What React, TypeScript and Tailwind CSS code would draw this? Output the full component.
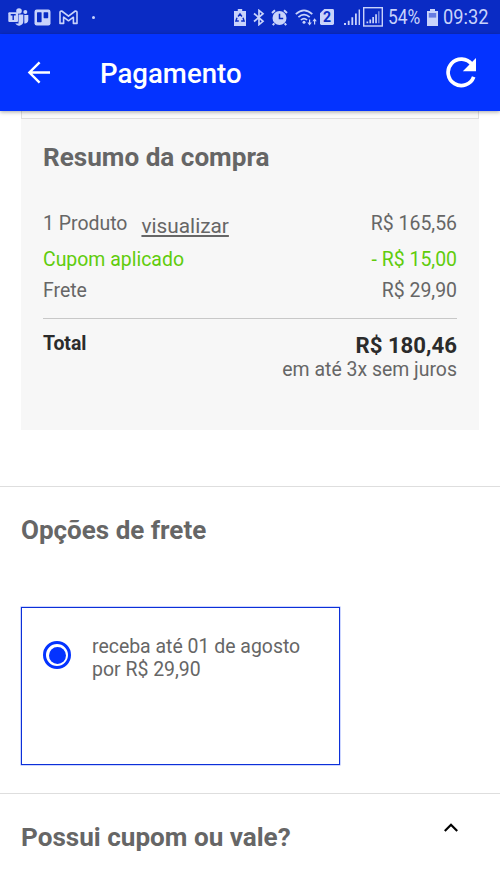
import React from 'react';

const TeamsIcon = () => (
  <svg width="21" height="18" viewBox="0 0 21 18" fill="currentColor">
    <circle cx="11" cy="3" r="2.8" />
    <circle cx="17.3" cy="4" r="2" />
    <path d="M10.5 6.5h4.8v6.8a4.3 4.3 0 0 1-8 2.2h3.2z" />
    <path d="M16.3 7h4v5a3.4 3.4 0 0 1-4.2 3.3q.5-1 .2-2.3z" />
    <rect x="0.3" y="4.3" width="9.7" height="9.6" rx="1" />
    <path d="M2.7 6.7h5M5.2 6.7v5.2" stroke="#0a2bc4" strokeWidth="1.4" fill="none" />
  </svg>
);

const BoardIcon = () => (
  <svg width="17" height="17" viewBox="0 0 17 17">
    <rect x="0.5" y="0.5" width="16" height="16" rx="2.2" fill="currentColor" />
    <rect x="3" y="3.2" width="4.6" height="10" rx="0.6" fill="#0a2bc4" />
    <rect x="9.6" y="3.2" width="4.6" height="6" rx="0.6" fill="#0a2bc4" />
  </svg>
);

const MailIcon = () => (
  <svg width="19" height="15" viewBox="0 0 19 15" fill="none" stroke="currentColor" strokeWidth="1.6" strokeLinejoin="round">
    <path d="M1 2.6Q1 .9 2.7 1L9.5 6.2 16.3 1Q18 .9 18 2.6V13.4h-3.6V7.2L9.5 10.8 4.6 7.2v6.2H1z" />
  </svg>
);

const BatterySaverIcon = () => (
  <svg width="12" height="17" viewBox="0 0 12 17">
    <path d="M3.8 0h4.4v2H12v15H0V2h3.8z" fill="currentColor" />
    <path d="M4.1 7.5 6 4.9l1.9 2.6M9 8.8l1.1 3.2H7.2M4.8 12H1.9L3 8.8" fill="none" stroke="#0a2bc4" strokeWidth="1.4" />
  </svg>
);

const BluetoothIcon = () => (
  <svg width="12" height="17" viewBox="0 0 12 17" fill="none" stroke="currentColor" strokeWidth="1.7">
    <path d="m1 4.5 9 7.8-4 3.3V1.4l4 3.3-9 7.8" />
  </svg>
);

const AlarmIcon = () => (
  <svg width="17" height="17" viewBox="0 0 17 17">
    <circle cx="8.5" cy="9" r="7" fill="currentColor" />
    <path d="m1 4 3-2.8M16 4l-3-2.8M3.3 14.3l-1.5 1.9M13.7 14.3l1.5 1.9" stroke="currentColor" strokeWidth="2" />
    <path d="M8.5 4.8v4.7h3.7" fill="none" stroke="#0a2bc4" strokeWidth="1.5" />
  </svg>
);

const WifiIcon = () => (
  <svg width="23" height="17" viewBox="0 0 23 17" fill="none" stroke="currentColor" strokeWidth="1.7">
    <path d="M.8 5.2Q9 -2.5 17.3 5.2M3.4 8.2Q9 3 14.7 8.2M5.9 11Q9 8.1 12.1 11" />
    <circle cx="9" cy="13.3" r="1.5" fill="currentColor" stroke="none" />
    <path d="M14.6 10.5v4M19.6 15.5v-4" strokeWidth="1.2" />
    <path d="M12.4 13.5h4.4l-2.2 3zM17.4 12.3h4.4l-2.2-3z" fill="currentColor" stroke="none" />
  </svg>
);

const SimIcon = () => (
  <div className="relative h-4 w-[14px]">
    <svg className="block" width="14" height="16" viewBox="0 0 14 16" fill="currentColor">
      <path d="M4.3 0H12.6Q14 0 14 1.4V14.6Q14 16 12.6 16H1.4Q0 16 0 14.6V4.3z" />
    </svg>
    <span className="absolute inset-0 text-center text-[14px] leading-[17px] font-bold text-[#0a2bc4]">2</span>
  </div>
);

const SignalIcon = () => (
  <svg width="17" height="16" viewBox="0 0 17 16" fill="currentColor">
    <path d="M0 14h2v2H0zM3.8 11.8h1.8V16H3.8zM7.4 8.3h1.8V16H7.4zM11 4.5h1.8V16H11zM14.6 0.5H16V16h-1.4z" />
  </svg>
);

const BoxedSignalIcon = () => (
  <svg width="20" height="20" viewBox="0 0 20 20">
    <rect x="0.7" y="0.7" width="18.6" height="18.3" fill="none" stroke="currentColor" strokeWidth="1.4" />
    <path d="M3.5 14.6h1.7v1.6H3.5zM6.4 12.6h1.7v3.6H6.4zM9.3 10h1.7v6.2H9.3zM12.2 7.2h1.7v9h-1.7z" fill="currentColor" />
    <path d="M15.1 4.3h1.4v11.9h-1.4z" fill="currentColor" opacity="0.6" />
  </svg>
);

const BatteryIcon = () => (
  <svg width="11" height="17" viewBox="0 0 11 17">
    <path d="M3 0h5v2h3v15H0V2h3z" fill="currentColor" />
    <path d="M1.8 4h7.4v4.6H1.8z" fill="#667be2" />
  </svg>
);

const StatusBar = () => (
  <div className="flex h-[34px] items-center bg-[#0a2bc4] pl-2 text-[#c9d3fb]">
    <TeamsIcon />
    <div className="ml-[5px]"><BoardIcon /></div>
    <div className="ml-2"><MailIcon /></div>
    <div className="ml-[14px] h-[3px] w-[3px] rounded-full bg-[#c9d3fb]" />
    <div className="ml-[139px]"><BatterySaverIcon /></div>
    <div className="ml-[7px]"><BluetoothIcon /></div>
    <div className="ml-[6px]"><AlarmIcon /></div>
    <div className="ml-[7px]"><WifiIcon /></div>
    <div className="ml-[2px]"><SimIcon /></div>
    <div className="ml-[10px]"><SignalIcon /></div>
    <div className="ml-[2px]"><BoxedSignalIcon /></div>
    <div className="ml-[5px] w-[39px]">
      <span className="inline-block origin-left scale-x-[0.85] text-[20.5px] leading-[34px]">54%</span>
    </div>
    <div><BatteryIcon /></div>
    <div className="ml-[5px]">
      <span className="inline-block origin-left scale-x-[0.89] text-[20.5px] leading-[34px]">09:32</span>
    </div>
  </div>
);

const AppBar = () => (
  <header className="relative flex h-[77px] items-center bg-[#0433ff] pr-[23px] pl-[27px] text-white shadow-[0_1px_4px_rgba(0,0,0,0.35)]">
    <svg width="24" height="24" viewBox="0 0 24 24" fill="none" stroke="currentColor" strokeWidth="2.4">
      <path d="M23 11.5H3M12.6 1.3 2.4 11.5l10.2 10.2" />
    </svg>
    <h1 className="mt-[2px] ml-[49px] text-[27.6px] leading-8 font-medium">Pagamento</h1>
    <svg className="ml-auto" width="32" height="32" viewBox="0 0 32 32">
      <path d="M26.9 7.4A13.2 13.2 0 1 0 28.7 19.8" fill="none" stroke="currentColor" strokeWidth="3.7" />
      <path d="M31 1v13.2H17.8z" fill="currentColor" />
    </svg>
  </header>
);

interface SummaryRowProps {
  label: string;
  value: string;
  className: string;
}

const SummaryRow: React.FC<SummaryRowProps> = ({ label, value, className }) => (
  <div className={`flex justify-between ${className}`}>
    <span>{label}</span>
    <span>{value}</span>
  </div>
);

const OrderSummary = () => (
  <section className="mx-[21px] h-[319px] bg-[#f7f7f7] text-[19.45px] leading-6 text-[#666]">
    <div className="h-2 border-x border-b border-[#dedede] bg-[#fafafa]" />
    <div className="px-[22px] pt-[22px]">
      <h2 className="text-[26.1px] leading-8 font-bold">Resumo da compra</h2>
      <div className="mt-[39px] flex justify-between">
        <div className="flex">
          <span>1 Produto</span>
          <a className="relative top-[2px] ml-[14px] text-[20.8px] underline underline-offset-2">visualizar</a>
        </div>
        <span>R$ 165,56</span>
      </div>
      <SummaryRow label="Cupom aplicado" value="- R$ 15,00" className="mt-3 text-[#60cc0c]" />
      <SummaryRow label="Frete" value="R$ 29,90" className="mt-[7px]" />
      <div className="mt-[15px] border-t border-[#c8c8c8]" />
      <div className="flex justify-between pt-[13px] font-bold text-[#2b2b2b]">
        <span>Total</span>
        <span className="pt-px text-[22.2px]">R$ 180,46</span>
      </div>
      <p className="text-right leading-[26px]">em até 3x sem juros</p>
    </div>
  </section>
);

const ShippingOptions = () => (
  <section className="mt-14 h-[307px] border-t border-[#dedede] px-[21px] pt-[27px]">
    <h2 className="text-[26px] leading-8 font-bold text-[#666]">Opções de frete</h2>
    <label className="mt-[61px] flex h-[158px] w-[319px] border border-[#0c30d8] pt-[27px] pl-[21px] shadow-[0_0_0_0.5px_rgba(4,51,255,0.4)]">
      <span className="mt-[6px] flex h-7 w-7 items-center justify-center rounded-full border-3 border-[#0433ff]">
        <span className="h-[17px] w-[17px] rounded-full bg-[#0433ff]" />
      </span>
      <span className="ml-[21px] text-[19.45px] leading-[23px] text-[#666]">
        receba até 01 de agosto
        <br />
        por R$ 29,90
      </span>
    </label>
  </section>
);

const CouponSection = () => (
  <section className="flex justify-between border-t border-[#dedede] pt-[27px] pr-[41px] pl-[21px]">
    <h2 className="text-[26.1px] leading-8 font-bold text-[#666]">Possui cupom ou vale?</h2>
    <svg width="16" height="12" viewBox="0 0 16 12" fill="none" stroke="#000" strokeWidth="2.2">
      <path d="m1.8 10 6.2-6.2 6.2 6.2" />
    </svg>
  </section>
);

export default function App() {
  return (
    <div className="h-[889px] w-[500px] overflow-hidden bg-white font-['Roboto',sans-serif]">
      <StatusBar />
      <AppBar />
      <OrderSummary />
      <ShippingOptions />
      <CouponSection />
    </div>
  );
}
